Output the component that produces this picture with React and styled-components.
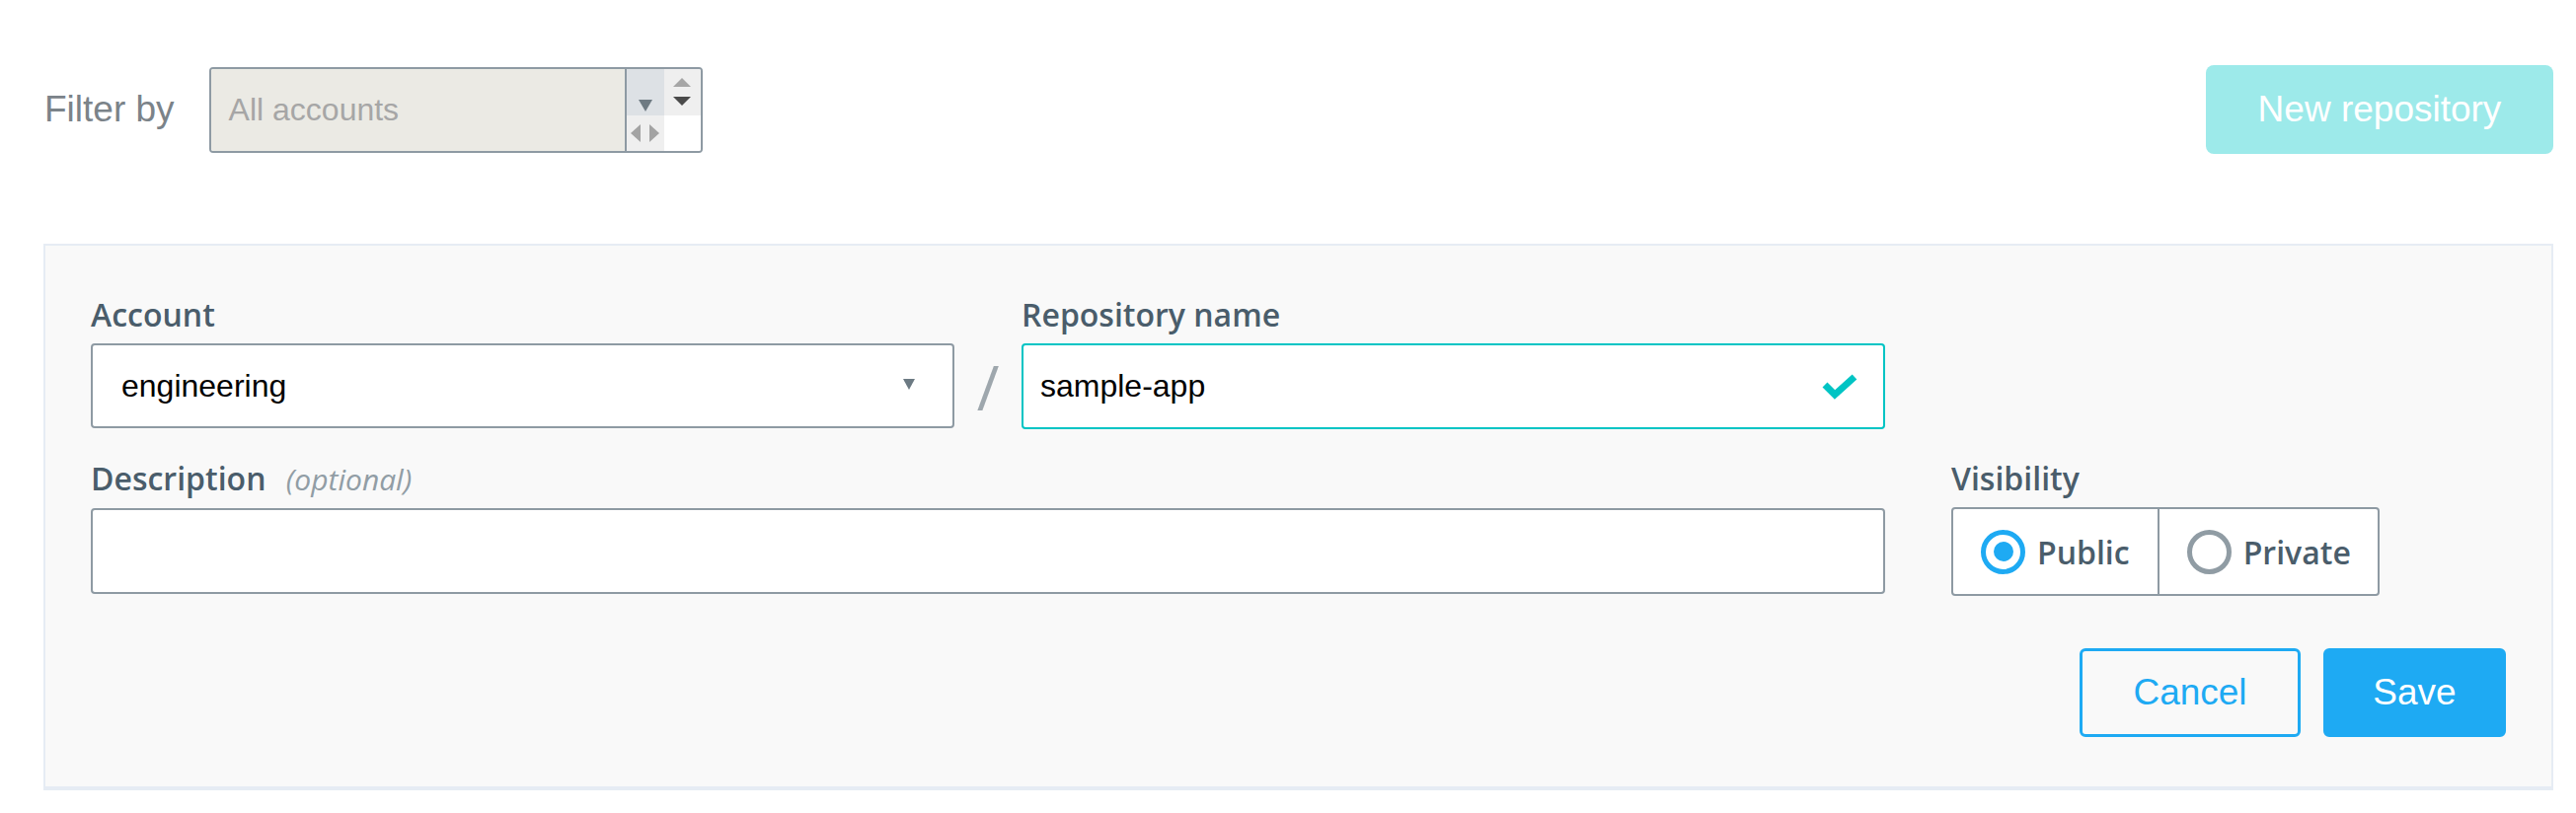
import React from 'react';
import styled, { createGlobalStyle } from 'styled-components';

const GlobalStyle = createGlobalStyle`
  html, body {
    margin: 0;
    padding: 0;
    background: #ffffff;
  }
  body {
    font-family: "Liberation Sans", Arial, sans-serif;
  }
`

const Page = styled.div`
  padding: 66px 23px 0 44px;
`

const Header = styled.div`
  display: flex;
  justify-content: space-between;
  align-items: center;
`

const FilterGroup = styled.div`
  display: flex;
  align-items: center;
  gap: 35px;
`

const FilterLabel = styled.span`
  margin-left: 1px;
  font-size: 37px;
  color: #7b8389;
`

const FakeSelect = styled.div`
  display: flex;
  width: 500px;
  height: 87px;
  box-sizing: border-box;
  border: 2px solid #8e9aa3;
  border-radius: 4px;
  overflow: hidden;
`

const SelectValue = styled.div`
  flex: 1;
  display: flex;
  align-items: center;
  padding-left: 18px;
  background: #ebeae4;
  border-right: 2px solid #8e9aa3;
  font-size: 32px;
  color: #a6a6a6;
`

const ScrollColumn = styled.div`
  width: ${p => p.$width}px;
  display: grid;
  grid-template-rows: 47px 1fr;
`

const ScrollCell = styled.div`
  background: ${p => p.$bg};
  display: flex;
  flex-direction: ${p => p.$dir || 'row'};
  align-items: ${p => p.$align || 'center'};
  justify-content: center;
  gap: ${p => p.$gap || 0}px;
  padding-bottom: ${p => p.$pb || 0}px;
  box-sizing: border-box;
`

const Triangle = styled.span`
  width: 0;
  height: 0;
  ${p => p.$dir === 'down' && `
    border-left: ${p.$w / 2}px solid transparent;
    border-right: ${p.$w / 2}px solid transparent;
    border-top: ${p.$h}px solid ${p.$color};
  `}
  ${p => p.$dir === 'up' && `
    border-left: ${p.$w / 2}px solid transparent;
    border-right: ${p.$w / 2}px solid transparent;
    border-bottom: ${p.$h}px solid ${p.$color};
  `}
  ${p => p.$dir === 'left' && `
    border-top: ${p.$h / 2}px solid transparent;
    border-bottom: ${p.$h / 2}px solid transparent;
    border-right: ${p.$w}px solid ${p.$color};
  `}
  ${p => p.$dir === 'right' && `
    border-top: ${p.$h / 2}px solid transparent;
    border-bottom: ${p.$h / 2}px solid transparent;
    border-left: ${p.$w}px solid ${p.$color};
  `}
`

const NewRepoButton = styled.button`
  width: 352px;
  height: 90px;
  border: none;
  border-radius: 8px;
  background: #9deaea;
  color: #ffffff;
  font-family: "Liberation Sans", Arial, sans-serif;
  font-size: 37px;
  cursor: default;
`

const Panel = styled.div`
  margin-top: 91px;
  background: #f9f9f9;
  border: 2px solid #e6ecf4;
  border-bottom-width: 4px;
  padding: 50px 46px;
`

const FormGrid = styled.div`
  display: grid;
  grid-template-columns: 875px 68px 875px 67px 1fr;
  row-gap: 30px;
  align-items: start;
`

const Field = styled.div`
  grid-column: ${p => p.$col};
  display: flex;
  flex-direction: column;
`

const Label = styled.label`
  font-family: "Open Sans", sans-serif;
  font-weight: 600;
  font-size: 32px;
  line-height: 40px;
  color: #4a5d6b;
  margin-bottom: 9px;
`

const Optional = styled.span`
  margin-left: 12px;
  font-weight: 400;
  font-style: italic;
  font-size: 30px;
  color: #919da5;
`

const Slash = styled.div`
  grid-column: 2;
  align-self: end;
  height: 86px;
  display: flex;
  align-items: center;
  justify-content: center;
  font-family: "Open Sans", sans-serif;
  font-weight: 400;
  font-size: 62px;
  color: #9ea7ad;
`

const Box = styled.div`
  height: ${p => p.$h || 86}px;
  box-sizing: border-box;
  background: #ffffff;
  border: 2px solid ${p => p.$valid ? '#00c4c4' : '#8e9aa3'};
  border-radius: 4px;
  display: flex;
  align-items: center;
  padding: 0 ${p => p.$pr || 20}px 0 ${p => p.$pl || 17}px;
  font-size: 32px;
  color: #000000;
`

const BoxText = styled.span`
  flex: 1;
`

const Caret = styled.span`
  width: 0;
  height: 0;
  border-left: 6px solid transparent;
  border-right: 6px solid transparent;
  border-top: 11px solid #6c7a83;
  margin-top: -3px;
`

const RadioGroup = styled.div`
  display: flex;
  width: 434px;
  height: 90px;
  box-sizing: border-box;
  background: #ffffff;
  border: 2px solid #8e9aa3;
  border-radius: 4px;
`

const RadioOption = styled.div`
  display: flex;
  align-items: center;
  gap: 12px;
  padding: 0 ${p => p.$pr}px 0 28px;
  border-left: ${p => p.$divider ? '2px solid #8e9aa3' : 'none'};
  font-family: "Open Sans", sans-serif;
  font-weight: 600;
  font-size: 32px;
  color: #4a5d6b;
`

const RadioCircle = styled.span`
  width: 45px;
  height: 45px;
  box-sizing: border-box;
  border-radius: 50%;
  border: 5px solid ${p => p.$checked ? '#1eaaf3' : '#909ca4'};
  display: flex;
  align-items: center;
  justify-content: center;
  &::after {
    content: '';
    width: 20px;
    height: 20px;
    border-radius: 50%;
    background: ${p => p.$checked ? '#1eaaf3' : 'transparent'};
  }
`

const Actions = styled.div`
  display: flex;
  justify-content: flex-end;
  gap: 23px;
  margin-top: 53px;
`

const ActionButton = styled.button`
  width: ${p => p.$w}px;
  height: 90px;
  box-sizing: border-box;
  border-radius: 6px;
  border: 3px solid #1eaaf3;
  background: ${p => p.$primary ? '#1eaaf3' : 'transparent'};
  color: ${p => p.$primary ? '#ffffff' : '#1eaaf3'};
  font-family: "Liberation Sans", Arial, sans-serif;
  font-size: 37px;
  cursor: default;
`

const Check = () => (
  <svg width="36" height="26" viewBox="0 0 36 26">
    <path d="M3 11 L13 21 L33 3" fill="none" stroke="#00c4c4" strokeWidth="7" strokeLinejoin="miter" />
  </svg>
);

export default function App() {
  return (
    <Page>
      <GlobalStyle />
      <Header>
        <FilterGroup>
          <FilterLabel>Filter by</FilterLabel>
          <FakeSelect>
            <SelectValue>All accounts</SelectValue>
            <ScrollColumn $width={38}>
              <ScrollCell $bg="#dde1e5" $pb={4} $align="flex-end">
                <Triangle $dir="down" $w={14} $h={12} $color="#6e7a82" />
              </ScrollCell>
              <ScrollCell $bg="#efefef" $gap={9}>
                <Triangle $dir="left" $w={10} $h={18} $color="#a3a3a3" />
                <Triangle $dir="right" $w={10} $h={18} $color="#a3a3a3" />
              </ScrollCell>
            </ScrollColumn>
            <ScrollColumn $width={37}>
              <ScrollCell $bg="#efefef" $dir="column" $gap={10}>
                <Triangle $dir="up" $w={19} $h={9} $color="#a6a6a6" />
                <Triangle $dir="down" $w={19} $h={9} $color="#4a4a4a" />
              </ScrollCell>
              <ScrollCell $bg="#ffffff" />
            </ScrollColumn>
          </FakeSelect>
        </FilterGroup>
        <NewRepoButton>New repository</NewRepoButton>
      </Header>

      <Panel>
        <FormGrid>
          <Field $col="1">
            <Label>Account</Label>
            <Box $pl={29} $pr={38}>
              <BoxText>engineering</BoxText>
              <Caret />
            </Box>
          </Field>
          <Slash>/</Slash>
          <Field $col="3">
            <Label>Repository name</Label>
            <Box $valid $pl={17} $pr={26} $h={87}>
              <BoxText>sample-app</BoxText>
              <Check />
            </Box>
          </Field>
          <Field $col="1 / span 3">
            <Label>Description <Optional>(optional)</Optional></Label>
            <Box $h={87} />
          </Field>
          <Field $col="5">
            <Label>Visibility</Label>
            <RadioGroup>
              <RadioOption $pr={28}>
                <RadioCircle $checked />
                Public
              </RadioOption>
              <RadioOption $divider $pr={26}>
                <RadioCircle />
                Private
              </RadioOption>
            </RadioGroup>
          </Field>
        </FormGrid>
        <Actions>
          <ActionButton $w={224}>Cancel</ActionButton>
          <ActionButton $w={185} $primary>Save</ActionButton>
        </Actions>
      </Panel>
    </Page>
  );
}
